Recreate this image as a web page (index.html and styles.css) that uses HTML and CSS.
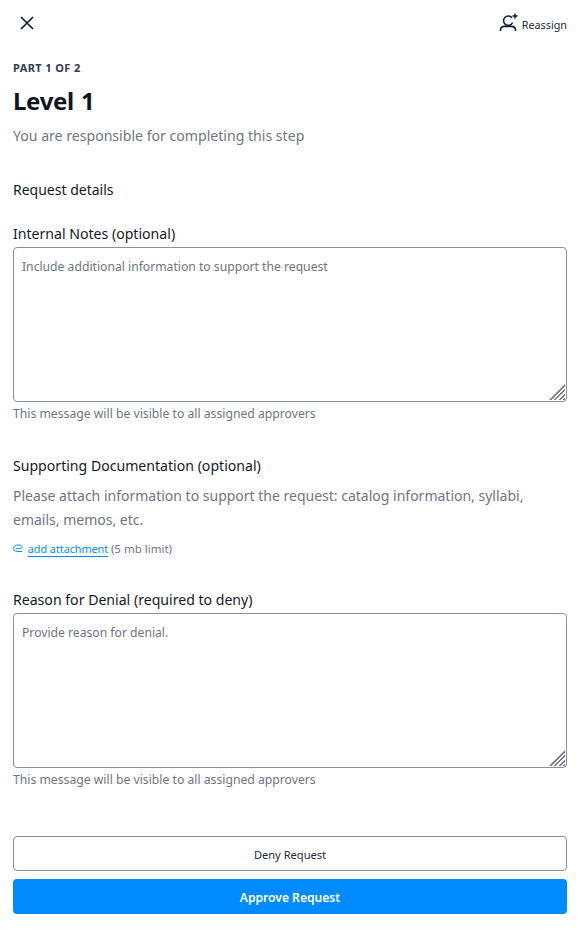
FILE: index.html
```html
<!DOCTYPE html>
<html lang="en">
<head>
    <meta charset="UTF-8">
    <meta name="viewport" content="width=device-width, initial-scale=1.0">
    <title>Level 1</title>
    <link rel="stylesheet" href="styles.css">
</head>
<body>
    <header class="topbar">
        <button class="close-btn" aria-label="Close">
            <svg width="14" height="14" viewBox="0 0 14 14"><path d="M1 1l12 12M13 1L1 13" stroke="#14213a" stroke-width="1.7" fill="none"/></svg>
        </button>
        <button class="reassign-btn">
            <svg width="20" height="20" viewBox="0 0 20 20" fill="none">
                <path d="M13 4.800A4.700 4.700 0 1 0 13.600 9.500" stroke="#14213a" stroke-width="1.600"/>
                <path d="M1.500 18v-.8c0-2.300 1.700-3.800 4-3.800h7c2.300 0 4 1.500 4 3.800v.8" stroke="#14213a" stroke-width="1.600"/>
                <path d="M16 .5v5M13.500 3h5" stroke="#14213a" stroke-width="1.600"/>
            </svg>
            <span>Reassign</span>
        </button>
    </header>
    <main class="content">
        <p class="eyebrow">PART 1 OF 2</p>
        <h1>Level 1</h1>
        <p class="subtitle">You are responsible for completing this step</p>
        <h2>Request details</h2>

        <section class="notes">
            <label for="notes">Internal Notes (optional)</label>
            <div class="textbox">
                <textarea id="notes" placeholder="Include additional information to support the request"></textarea>
            </div>
            <p class="hint">This message will be visible to all assigned approvers</p>
        </section>

        <section class="docs">
            <h3>Supporting Documentation (optional)</h3>
            <p class="docs-text">Please attach information to support the request: catalog information, syllabi, emails, memos, etc.</p>
            <p class="attach">
                <svg width="10" height="9" viewBox="0 0 10 9" fill="none"><path d="M9 7.500H4.500C2 7.500.7 6.200.7 4.300S2 1 4.500 1h1.300c1.900 0 3.200.9 3.200 2.300 0 1-.8 1.400-1.700 1.400H3" stroke="#008cff" stroke-width="1"/></svg>
                <a href="#">add attachment</a> <span class="limit">(5 mb limit)</span>
            </p>
        </section>

        <section class="denial">
            <label for="denial">Reason for Denial (required to deny)</label>
            <div class="textbox">
                <textarea id="denial" placeholder="Provide reason for denial."></textarea>
            </div>
            <p class="hint">This message will be visible to all assigned approvers</p>
        </section>

        <div class="actions">
            <button class="btn btn-deny">Deny Request</button>
            <button class="btn btn-approve">Approve Request</button>
        </div>
    </main>
</body>
</html>
```

FILE: styles.css
```css
* {
    box-sizing: border-box;
}
body {
    font-family: 'Noto Sans', sans-serif;
    margin: 0;
    padding: 0;
    background-color: #fff;
    color: #14192a;
}
button {
    font-family: inherit;
    background: none;
    border: none;
    padding: 0;
    cursor: pointer;
}
.topbar {
    display: flex;
    justify-content: space-between;
    align-items: center;
    height: 45px;
    padding: 0 13px 0 20px;
}
.close-btn {
    display: flex;
}
.reassign-btn {
    display: flex;
    align-items: center;
    gap: 3px;
    font-size: 10.8px;
    color: #222b3a;
}
.reassign-btn span {
    margin-top: 4px;
}
.content {
    padding: 0 13px;
}
.eyebrow {
    margin: 15px 0 0;
    font-size: 11px;
    line-height: 15px;
    font-weight: 700;
    letter-spacing: 0.4px;
    color: #333b4a;
}
h1 {
    margin: 9px 0 0;
    font-size: 24px;
    line-height: 34px;
    font-weight: 700;
    word-spacing: 1px;
    letter-spacing: -0.3px;
    color: #10141f;
}
.subtitle {
    margin: 8px 0 0;
    font-size: 14.1px;
    line-height: 20px;
    color: #6e7583;
}
h2 {
    margin: 34px 0 0;
    font-size: 14px;
    line-height: 20px;
    font-weight: 400;
}
label, h3 {
    display: block;
    margin: 0;
    font-size: 14.1px;
    line-height: 20px;
    font-weight: 400;
}
.textbox {
    position: relative;
    margin-top: 3px;
}
.textbox::after {
    content: "";
    position: absolute;
    right: 2px;
    bottom: 2px;
    width: 16px;
    height: 16px;
    background: repeating-linear-gradient(135deg, #fff 0, #fff 1.700px, #777d8c 1.700px, #777d8c 3.200px);
    clip-path: polygon(100% 0, 100% 100%, 0 100%);
    pointer-events: none;
}
textarea {
    display: block;
    width: 100%;
    height: 155px;
    padding: 10px 8px;
    font-family: inherit;
    font-size: 12.16px;
    line-height: 17px;
    border: 1px solid #8a90a0;
    border-radius: 4px;
    outline: none;
}
textarea::placeholder {
    color: #6e7583;
    opacity: 1;
}
.hint {
    margin: 3px 0 0;
    font-size: 12.2px;
    line-height: 17px;
    color: #6e7583;
}
.notes {
    margin-top: 24px;
}
.docs {
    margin-top: 34px;
}
.docs-text {
    margin: 8px 0 0;
    font-size: 14px;
    line-height: 24px;
    color: #6e7583;
}
.attach {
    margin: 10px 0 0;
    font-size: 10.75px;
    line-height: 14px;
    color: #6e7583;
}
.attach svg {
    margin-right: 2px;
}
.attach a {
    color: #008cff;
    text-decoration: none;
    border-bottom: 1px solid #008cff;
}
.limit {
    font-size: 11.5px;
}
.denial {
    margin-top: 34px;
}
.actions {
    display: flex;
    flex-direction: column;
    gap: 8px;
    margin-top: 48px;
}
.btn {
    width: 100%;
    height: 35px;
    padding-top: 2px;
    border-radius: 4px;
    font-size: 11.1px;
}
.btn-deny {
    background: #fff;
    border: 1px solid #8a90a0;
    color: #222b3a;
}
.btn-approve {
    background: #008cff;
    color: #fff;
    font-size: 12.1px;
    font-weight: 600;
}
```
